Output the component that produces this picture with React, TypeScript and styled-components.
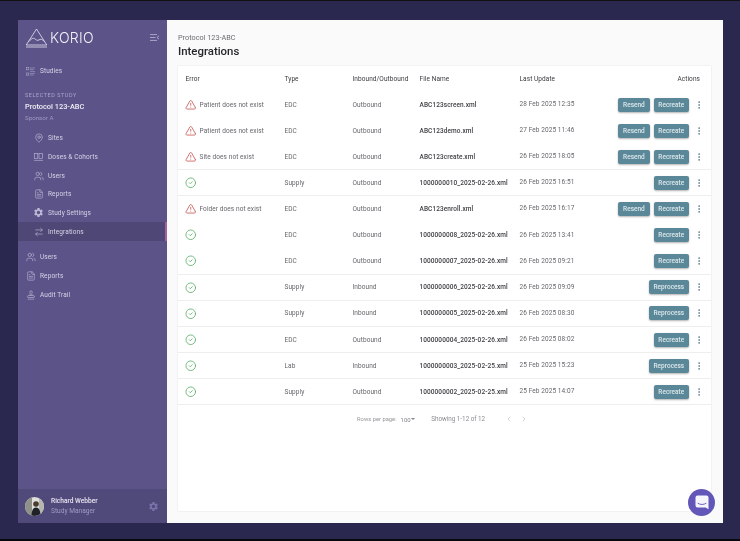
import React from "react";
import styled, { createGlobalStyle } from "styled-components";
import {
  MapPin,
  Users as UsersIcon,
  FileText,
  ArrowRightLeft,
  Stamp,
  TriangleAlert,
  CircleCheck,
  EllipsisVertical,
  ChevronLeft,
  ChevronRight,
} from "lucide-react";
import { MdSettings } from "react-icons/md";

const GlobalStyle = createGlobalStyle`
  html, body {
    margin: 0;
    padding: 0;
    background: #000;
  }
  body {
    font-family: Roboto, "Liberation Sans", sans-serif;
  }
`;

const Page = styled.div`
  width: 740px;
  height: 541px;
  box-sizing: border-box;
  border-top: 1px solid #111;
  border-bottom: 2px solid #08080f;
  background: #2b2850;
  padding: 19px 17.5px 16px 18px;
  position: relative;
  overflow: hidden;
  filter: blur(0.4px);
`;

const Window = styled.div`
  display: flex;
  height: 503px;
`;

const Sidebar = styled.aside`
  width: 149px;
  flex: none;
  background: #5c5489;
  display: flex;
  flex-direction: column;
  color: #dcdaea;
`;

const Brand = styled.div`
  height: 35px;
  padding: 0 8px 0 7px;
  display: flex;
  align-items: center;
`;

const BrandName = styled.span`
  font-family: Inter, "Open Sans", sans-serif;
  font-weight: 300;
  font-size: 14px;
  letter-spacing: 0.3px;
  color: #f1f0f7;
  margin-left: 2px;
  flex: 1;
`;

const NavLink = styled.div<{ $nested?: boolean; $active?: boolean }>`
  height: ${(p) => (p.$nested ? "18.7px" : "18.8px")};
  display: flex;
  align-items: center;
  gap: 5px;
  padding-left: ${(p) => (p.$nested ? "16px" : "8px")};
  font-size: 6.5px;
  letter-spacing: 0.1px;
  color: #d6d3e6;
  background: ${(p) => (p.$active ? "#4f4877" : "transparent")};
  border-right: 2px solid ${(p) => (p.$active ? "#a2619c" : "transparent")};
`;

const NavIcon = styled.span`
  width: 9px;
  height: 10px;
  flex: none;
  display: flex;
  align-items: center;
  justify-content: center;
  color: #bdb9d6;

  svg {
    flex: none;
  }
`;

const StudiesGroup = styled.div`
  margin-top: 7px;
`;

const StudyBlock = styled.div`
  margin-top: 10.5px;
  padding: 0 7px;
  height: 37.5px;
`;

const StudyCaption = styled.div`
  font-size: 5.4px;
  letter-spacing: 0.6px;
  line-height: 8px;
  color: #aaa5cb;
`;

const StudyName = styled.div`
  font-size: 7.4px;
  font-weight: 500;
  line-height: 10px;
  margin-top: 3px;
  color: #f0eff6;
`;

const StudySponsor = styled.div`
  font-size: 6.2px;
  line-height: 8px;
  margin-top: 2px;
  color: #9d97c2;
`;

const NavGroup = styled.nav<{ $spaced?: boolean }>`
  margin-top: ${(p) => (p.$spaced ? "7px" : "0")};
`;

const UserFooter = styled.div`
  margin-top: auto;
  height: 34px;
  background: #504a7a;
  display: flex;
  align-items: center;
  padding: 0 8px 0 7px;
`;

const Avatar = styled.div`
  width: 19px;
  height: 19px;
  border-radius: 50%;
  overflow: hidden;
  flex: none;
`;

const UserText = styled.div`
  margin-left: 7px;
  flex: 1;
`;

const UserName = styled.div`
  font-size: 6.6px;
  font-weight: 500;
  line-height: 10px;
  color: #e8e6f2;
`;

const UserRole = styled.div`
  font-size: 6.6px;
  line-height: 10px;
  color: #a09ac4;
`;

const Main = styled.main`
  flex: 1;
  min-width: 0;
  background: #fafafa;
  padding: 12px 11.5px 12px 11px;
  display: flex;
  flex-direction: column;
`;

const Crumb = styled.div`
  font-size: 7.3px;
  line-height: 11px;
  color: #6d6d72;
`;

const Title = styled.h1`
  margin: 2px 0 8px;
  font-size: 11.4px;
  line-height: 13px;
  font-weight: 500;
  color: #26262c;
`;

const Card = styled.section`
  flex: 1;
  background: #fff;
  box-shadow: 0 0 1.5px rgba(0, 0, 0, 0.12);
`;

const Row = styled.div<{ $header?: boolean; $line?: boolean }>`
  display: grid;
  grid-template-columns: 99px 68px 67px 100px 70px 1fr;
  align-items: center;
  box-sizing: border-box;
  height: ${(p) => (p.$header ? "26px" : "26.11px")};
  padding: 0 11px 0 7.5px;
  font-size: 6.5px;
  letter-spacing: 0.08px;
  color: ${(p) => (p.$header ? "#3a3a40" : "#66666c")};
  border-bottom: 1px solid ${(p) => (p.$line ? "#eeeeee" : "transparent")};
`;

const ErrorCell = styled.div`
  display: flex;
  align-items: center;
  gap: 3.5px;
  margin-left: -1px;
`;

const FileName = styled.div`
  font-weight: 500;
  color: #404046;
  white-space: nowrap;
`;

const DateCell = styled.div`
  padding-bottom: 1px;
`;

const Actions = styled.div`
  display: flex;
  justify-content: flex-end;
  align-items: center;
  gap: 4px;
`;

const HeaderActions = styled.div`
  text-align: right;
`;

const ActionButton = styled.button`
  height: 14px;
  padding: 0 4.8px;
  border: 0;
  border-radius: 2px;
  background: #5b8898;
  color: #dbe7eb;
  font-family: inherit;
  font-size: 6.5px;
  font-weight: 500;
  box-shadow: 0 1px 2px rgba(0, 0, 0, 0.3);
`;

const Kebab = styled.span`
  width: 7px;
  margin: 0 -2px 0 2px;
  display: flex;
  justify-content: center;
  color: #64808c;

  svg {
    flex: none;
  }
`;

const Pagination = styled.div`
  height: 28px;
  display: flex;
  align-items: center;
  padding-left: 179px;
  font-size: 6.3px;
  color: #8c8c92;
`;

const RowsLabel = styled.span`
  font-size: 5.8px;
  color: #97979c;
`;

const RowsValue = styled.span`
  margin-left: 4px;
  font-size: 6px;
  color: #85858b;
`;

const Caret = styled.span`
  width: 0;
  height: 0;
  margin: 0 16px 0 0.5px;
  border-left: 2px solid transparent;
  border-right: 2px solid transparent;
  border-top: 2px solid #85858b;
`;

const PagerButtons = styled.span`
  display: flex;
  gap: 7px;
  margin-left: 20px;
  color: #a8a8ad;
`;

const ChatBubble = styled.div`
  position: absolute;
  left: 688px;
  top: 487.5px;
  width: 27px;
  height: 27px;
  border-radius: 50%;
  background: #6257b8;
  display: flex;
  align-items: center;
  justify-content: center;
`;

type RowData = {
  error?: string;
  type: string;
  dir: string;
  file: string;
  date: string;
  actions: string[];
  line: boolean;
};

const rows: RowData[] = [
  { error: "Patient does not exist", type: "EDC", dir: "Outbound", file: "ABC123screen.xml", date: "28 Feb 2025 12:35", actions: ["Resend", "Recreate"], line: false },
  { error: "Patient does not exist", type: "EDC", dir: "Outbound", file: "ABC123demo.xml", date: "27 Feb 2025 11:46", actions: ["Resend", "Recreate"], line: false },
  { error: "Site does not exist", type: "EDC", dir: "Outbound", file: "ABC123create.xml", date: "26 Feb 2025 18:05", actions: ["Resend", "Recreate"], line: true },
  { type: "Supply", dir: "Outbound", file: "1000000010_2025-02-26.xml", date: "26 Feb 2025 16:51", actions: ["Recreate"], line: true },
  { error: "Folder does not exist", type: "EDC", dir: "Outbound", file: "ABC123enroll.xml", date: "26 Feb 2025 16:17", actions: ["Resend", "Recreate"], line: false },
  { type: "EDC", dir: "Outbound", file: "1000000008_2025-02-26.xml", date: "26 Feb 2025 13:41", actions: ["Recreate"], line: false },
  { type: "EDC", dir: "Outbound", file: "1000000007_2025-02-26.xml", date: "26 Feb 2025 09:21", actions: ["Recreate"], line: true },
  { type: "Supply", dir: "Inbound", file: "1000000006_2025-02-26.xml", date: "26 Feb 2025 09:09", actions: ["Reprocess"], line: true },
  { type: "Supply", dir: "Inbound", file: "1000000005_2025-02-26.xml", date: "26 Feb 2025 08:30", actions: ["Reprocess"], line: true },
  { type: "EDC", dir: "Outbound", file: "1000000004_2025-02-26.xml", date: "26 Feb 2025 08:02", actions: ["Recreate"], line: true },
  { type: "Lab", dir: "Inbound", file: "1000000003_2025-02-25.xml", date: "25 Feb 2025 15:23", actions: ["Reprocess"], line: true },
  { type: "Supply", dir: "Outbound", file: "1000000002_2025-02-25.xml", date: "25 Feb 2025 14:07", actions: ["Recreate"], line: true },
];

const Logo = () => (
  <svg width="23" height="20" viewBox="0 0 23 20" fill="none" stroke="#e6e4f0" strokeWidth="0.8">
    <path d="M1.2 17 11.500 1 21.800 17Z" strokeLinejoin="round" />
    <path d="M3.800 13.500c2.400-2.400 4-4 5.800-2.800 1.600 1 2.600 2.400 4.400 1.200 1.600-1 2.800-.8 5.200 1.400" />
    <path d="M1 19h21" />
  </svg>
);

const CollapseIcon = () => (
  <svg width="9" height="7" viewBox="0 0 9 7" fill="none" stroke="#bdb9d6" strokeWidth="0.8">
    <path d="M0 .6h7M0 3.5h5.500M0 6.400h7" />
    <path d="M9 1.800 7 3.500 9 5.200" />
  </svg>
);

const StudiesIcon = () => (
  <svg width="9" height="9" viewBox="0 0 9 9" fill="none" stroke="#a9a4c8" strokeWidth="0.6">
    <rect x="0.4" y="0.6" width="2.4" height="2.200" />
    <rect x="0.4" y="6" width="2.400" height="2.200" />
    <path d="M4 1h5M4 2.600h3.600M4 4.400h5M4 6.400h5M4 8h3.600" />
  </svg>
);

const DosesIcon = () => (
  <svg width="9" height="8" viewBox="0 0 9 8" fill="none" stroke="#bdb9d6" strokeWidth="0.6">
    <rect x="0.4" y="0.6" width="3.400" height="4.800" />
    <rect x="5" y="0.6" width="3.400" height="4.800" />
    <path d="M0 7.400h9" />
  </svg>
);

const UserPhoto = () => (
  <svg width="19" height="19" viewBox="0 0 19 19">
    <rect width="19" height="19" fill="#dfe0dc" />
    <rect width="7" height="19" fill="#8f9088" />
    <rect x="14" width="5" height="19" fill="#b6b8b0" />
    <circle cx="11" cy="7" r="2.800" fill="#4a3a30" />
    <path d="M6.500 19c0-6 2-8.600 4.500-8.600S15.500 13 15.500 19Z" fill="#1e2126" />
  </svg>
);

const ChatIcon = () => (
  <svg width="14" height="15" viewBox="0 0 14 15">
    <path d="M2.500 0.500h9A2 2 0 0 1 13.500 2.500V14.300L10.600 12.500H2.500A2 2 0 0 1 .5 10.500V2.500A2 2 0 0 1 2.500.5Z" fill="#f6f5fb" />
    <path d="M3 8.400c2.500 1.500 5.500 1.500 8 0" fill="none" stroke="#6257b8" strokeWidth="0.9" strokeLinecap="round" />
  </svg>
);

const iconProps = { size: 10, strokeWidth: 1.5 };

const App = () => (
  <>
    <GlobalStyle />
    <Page>
      <Window>
        <Sidebar>
          <Brand>
            <Logo />
            <BrandName>KORIO</BrandName>
            <CollapseIcon />
          </Brand>

          <StudiesGroup>
            <NavLink>
              <NavIcon><StudiesIcon /></NavIcon>
              Studies
            </NavLink>
          </StudiesGroup>

          <StudyBlock>
            <StudyCaption>SELECTED STUDY</StudyCaption>
            <StudyName>Protocol 123-ABC</StudyName>
            <StudySponsor>Sponsor A</StudySponsor>
          </StudyBlock>

          <NavGroup>
            <NavLink $nested><NavIcon><MapPin {...iconProps} /></NavIcon>Sites</NavLink>
            <NavLink $nested><NavIcon><DosesIcon /></NavIcon>Doses &amp; Cohorts</NavLink>
            <NavLink $nested><NavIcon><UsersIcon {...iconProps} /></NavIcon>Users</NavLink>
            <NavLink $nested><NavIcon><FileText {...iconProps} /></NavIcon>Reports</NavLink>
            <NavLink $nested><NavIcon><MdSettings size={11} /></NavIcon>Study Settings</NavLink>
            <NavLink $nested $active><NavIcon><ArrowRightLeft {...iconProps} /></NavIcon>Integrations</NavLink>
          </NavGroup>

          <NavGroup $spaced>
            <NavLink><NavIcon><UsersIcon {...iconProps} /></NavIcon>Users</NavLink>
            <NavLink><NavIcon><FileText {...iconProps} /></NavIcon>Reports</NavLink>
            <NavLink><NavIcon><Stamp {...iconProps} /></NavIcon>Audit Trail</NavLink>
          </NavGroup>

          <UserFooter>
            <Avatar><UserPhoto /></Avatar>
            <UserText>
              <UserName>Richard Webber</UserName>
              <UserRole>Study Manager</UserRole>
            </UserText>
            <MdSettings size={11} color="#7a72aa" />
          </UserFooter>
        </Sidebar>

        <Main>
          <Crumb>Protocol 123-ABC</Crumb>
          <Title>Integrations</Title>
          <Card>
            <Row $header>
              <div>Error</div>
              <div>Type</div>
              <div>Inbound/Outbound</div>
              <div>File Name</div>
              <div>Last Update</div>
              <HeaderActions>Actions</HeaderActions>
            </Row>
            {rows.map((r) => (
              <Row key={r.file} $line={r.line}>
                <ErrorCell>
                  {r.error ? (
                    <TriangleAlert size={11.5} strokeWidth={1.8} color="#c9605c" />
                  ) : (
                    <CircleCheck size={11.5} strokeWidth={1.8} color="#62b26e" />
                  )}
                  {r.error}
                </ErrorCell>
                <div>{r.type}</div>
                <div>{r.dir}</div>
                <FileName>{r.file}</FileName>
                <DateCell>{r.date}</DateCell>
                <Actions>
                  {r.actions.map((a) => (
                    <ActionButton key={a}>{a}</ActionButton>
                  ))}
                  <Kebab><EllipsisVertical size={10} strokeWidth={2} /></Kebab>
                </Actions>
              </Row>
            ))}
            <Pagination>
              <RowsLabel>Rows per page:</RowsLabel>
              <RowsValue>100</RowsValue>
              <Caret />
              <span>Showing 1-12 of 12</span>
              <PagerButtons>
                <ChevronLeft size={8} strokeWidth={1.5} />
                <ChevronRight size={8} strokeWidth={1.5} />
              </PagerButtons>
            </Pagination>
          </Card>
        </Main>
      </Window>
      <ChatBubble><ChatIcon /></ChatBubble>
    </Page>
  </>
);

export default App;
